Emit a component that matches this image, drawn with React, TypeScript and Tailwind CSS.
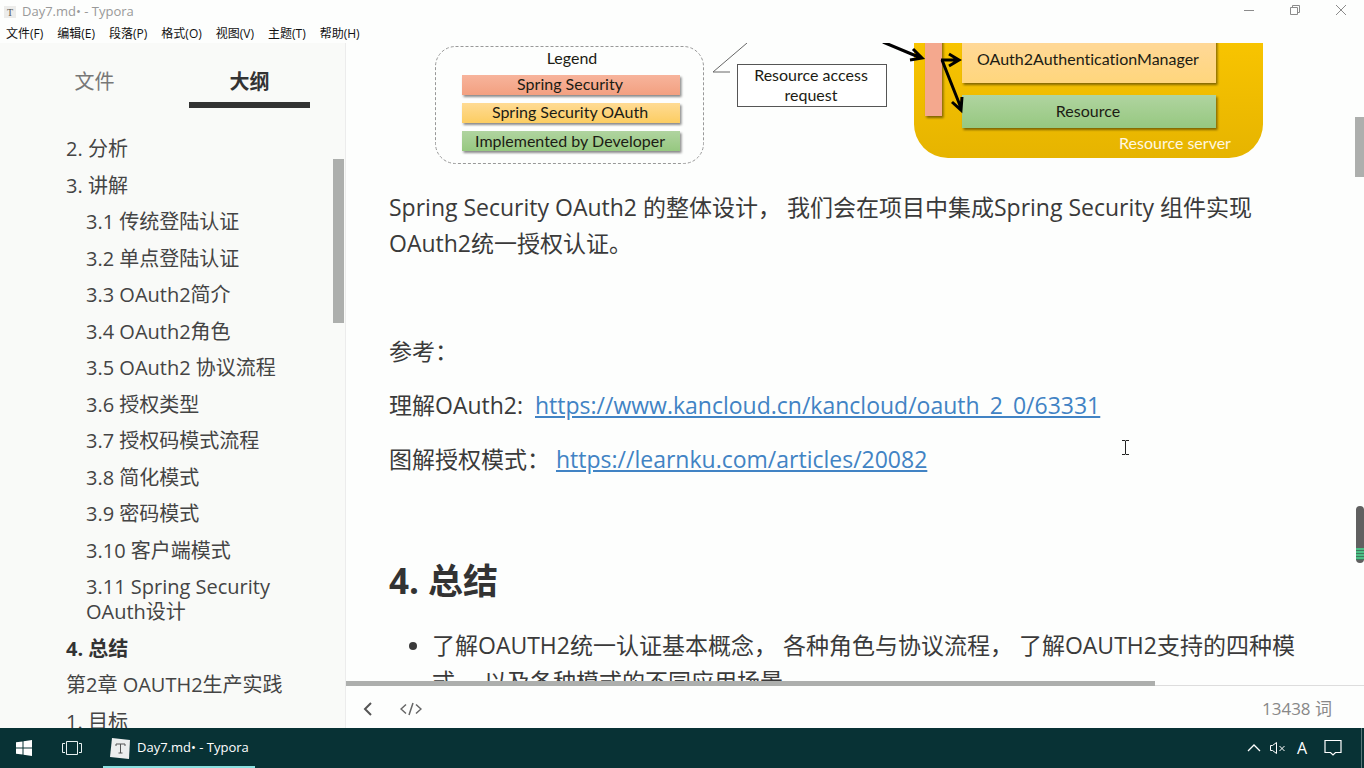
import { clsx } from "clsx";

const MENUS = ["文件(F)", "编辑(E)", "段落(P)", "格式(O)", "视图(V)", "主题(T)", "帮助(H)"];

const OUTLINE = [
  { level: 1, text: "2. 分析" },
  { level: 1, text: "3. 讲解" },
  { level: 2, text: "3.1 传统登陆认证" },
  { level: 2, text: "3.2 单点登陆认证" },
  { level: 2, text: "3.3 OAuth2简介" },
  { level: 2, text: "3.4 OAuth2角色" },
  { level: 2, text: "3.5 OAuth2 协议流程" },
  { level: 2, text: "3.6 授权类型" },
  { level: 2, text: "3.7 授权码模式流程" },
  { level: 2, text: "3.8 简化模式" },
  { level: 2, text: "3.9 密码模式" },
  { level: 2, text: "3.10 客户端模式" },
  { level: 2, text: "3.11 Spring Security OAuth设计" },
  { level: 1, text: "4. 总结", active: true },
  { level: 1, text: "第2章 OAUTH2生产实践" },
  { level: 1, text: "1. 目标" },
];

function TitleBar() {
  return (
    <header className="flex h-6 shrink-0 items-center justify-between pl-1 text-[13px] text-[#999]">
      <div className="flex items-center gap-[6px]">
        <span className="flex h-3 w-3 items-center justify-center bg-[#ececea] font-['Liberation_Serif'] text-[10px] text-[#555]">
          T
        </span>
        <span>Day7.md• - Typora</span>
      </div>
      <div className="flex pb-1">
        <button aria-label="Minimize" className="flex w-[46px] justify-center">
          <svg width="12" height="12" fill="none" stroke="#8b8b8b">
            <path d="M1 6.500h10" />
          </svg>
        </button>
        <button aria-label="Restore" className="flex w-[46px] justify-center">
          <svg width="12" height="12" fill="none" stroke="#8b8b8b">
            <path d="M1.500 3.500h7v7h-7zM3.500 3.500v-2h7v7h-2" />
          </svg>
        </button>
        <button aria-label="Close" className="flex w-[46px] justify-center">
          <svg width="12" height="12" fill="none" stroke="#8b8b8b">
            <path d="M1 1l10 10M11 1L1 11" />
          </svg>
        </button>
      </div>
    </header>
  );
}

function MenuBar() {
  return (
    <nav className="flex h-[19px] shrink-0 items-center gap-[14px] px-[6px] text-xs text-[#111]">
      {MENUS.map((menu) => (
        <button key={menu} className="whitespace-nowrap">
          {menu}
        </button>
      ))}
    </nav>
  );
}

function Sidebar() {
  return (
    <aside className="relative w-[346px] shrink-0 overflow-hidden border-r border-[#ececec] bg-[#f9faf8] text-[#444]">
      <div className="flex pr-[35px] pl-[34px] text-xl">
        <button className="h-[65px] w-[121px] pt-3 text-[#777]">文件</button>
        <button className="ml-[34px] h-[65px] w-[121px] border-b-[6px] border-[#333] pt-[18px] font-bold text-[#333]">
          大纲
        </button>
      </div>
      <ul className="mt-7 flex h-[598px] flex-col justify-between text-xl leading-[25px]">
        {OUTLINE.map((item) => (
          <li
            key={item.text}
            className={clsx(
              "pr-[60px]",
              item.level === 1 ? "pl-[66px]" : "pl-[86px]",
              item.active && "font-bold text-[#333]"
            )}
          >
            <a href="#outline">{item.text}</a>
          </li>
        ))}
      </ul>
      <div className="absolute top-[116px] right-[1px] h-[164px] w-[11px] bg-[#adafad]" />
    </aside>
  );
}

/* Bottom part of the OAuth architecture diagram */
function Diagram() {
  return (
    <svg
      width="875"
      height="127"
      viewBox="389 43 875 127"
      className="block font-[Lato] text-[16px] [font-variant-ligatures:none]"
      fill="#1c1c14"
      textAnchor="middle"
    >
      <defs>
        <linearGradient id="red" x2="0" y2="1">
          <stop stopColor="#f7b49c" />
          <stop offset="1" stopColor="#f3a080" />
        </linearGradient>
        <linearGradient id="yellow" x2="0" y2="1">
          <stop stopColor="#ffdb94" />
          <stop offset="1" stopColor="#fccd62" />
        </linearGradient>
        <linearGradient id="manager" x2="0" y2="1">
          <stop stopColor="#ffd9a0" />
          <stop offset="1" stopColor="#ffd67c" />
        </linearGradient>
        <linearGradient id="green" x2="0" y2="1">
          <stop stopColor="#b0d4a0" />
          <stop offset="1" stopColor="#96c880" />
        </linearGradient>
        <linearGradient id="server" x2="0" y2="1">
          <stop stopColor="#f8c400" />
          <stop offset="1" stopColor="#e6b400" />
        </linearGradient>
        <filter id="shadow" x="-10%" y="-10%" width="120%" height="140%">
          <feDropShadow dx="1.500" dy="2" stdDeviation="1" floodOpacity=".45" />
        </filter>
      </defs>

      {/* Legend */}
      <rect x="435.500" y="46.500" width="268" height="117" rx="20" fill="none" stroke="#999" strokeDasharray="3 2" />
      <text x="572" y="64">Legend</text>
      <g filter="url(#shadow)">
        <rect x="462" y="75" width="218" height="20" fill="url(#red)" />
        <rect x="462" y="103" width="218" height="20" fill="url(#yellow)" />
        <rect x="462" y="131" width="218" height="20" fill="url(#green)" />
      </g>
      <text x="570" y="90">Spring Security</text>
      <text x="570" y="118">Spring Security OAuth</text>
      <text x="570" y="147">Implemented by Developer</text>

      {/* Access request */}
      <path d="M747 43l-34 29h17" fill="none" stroke="#666" />
      <rect x="737.500" y="64.500" width="149" height="42" fill="#fff" stroke="#555" />
      <text x="811" y="81">Resource access</text>
      <text x="811" y="101">request</text>

      {/* Resource server */}
      <path d="M914 43h349v80a34 34 0 0 1-34 35H948a34 34 0 0 1-34-35z" fill="url(#server)" />
      <g filter="url(#shadow)">
        <rect x="925" y="30" width="17" height="86" fill="#f4a88e" />
        <rect x="962" y="30" width="254" height="53" fill="url(#manager)" />
        <rect x="962" y="95" width="254" height="33" fill="url(#green)" />
      </g>
      <text x="1088" y="65">OAuth2AuthenticationManager</text>
      <text x="1088" y="117">Resource</text>
      <text x="1175" y="149" fill="#fff8e0">Resource server</text>
      <g fill="none" stroke="#000" strokeWidth="3">
        <path d="M883 42l38 16M913 49l9 9-12 2" />
        <path d="M941 60h17M949 54l10 6-10 6" />
        <path d="M942 60l19 48M952 102l9 8 1-13" />
      </g>
    </svg>
  );
}

function Editor() {
  return (
    <main className="relative flex min-w-0 flex-1 flex-col">
      <article className="min-h-0 flex-1 overflow-hidden pr-[60px] pl-[43px] text-[23px] leading-9 text-[#3a3a3a]">
        <Diagram />
        <div className="mt-[19px] flex flex-col gap-[18px]">
          <p>
            Spring Security OAuth2 的整体设计， 我们会在项目中集成Spring Security 组件实现OAuth2统一授权认证。
          </p>
          <p className="h-9" />
          <p>参考：</p>
          <p>
            理解OAuth2:&nbsp;{" "}
            <a href="https://www.kancloud.cn/kancloud/oauth_2_0/63331" className="text-[#4183c4] underline">
              https://www.kancloud.cn/kancloud/oauth_2_0/63331
            </a>
          </p>
          <p>
            图解授权模式：{" "}
            <a href="https://learnku.com/articles/20082" className="text-[#4183c4] underline">
              https://learnku.com/articles/20082
            </a>
          </p>
        </div>
        <h2 className="mt-20 text-[35px] leading-[48px] font-bold text-[#333]">4. 总结</h2>
        <ul className="mt-[22px] list-disc pl-[43px]">
          <li>
            了解OAUTH2统一认证基本概念， 各种角色与协议流程， 了解OAUTH2支持的四种模式， 以及各种模式的不同应用场景
          </li>
        </ul>
      </article>
      <footer className="flex h-[43px] shrink-0 items-center gap-[26px] border-t border-[#ddd] bg-[#fdfefd] pt-[3px] pr-8 pl-4 text-[#666]">
        <button aria-label="Toggle sidebar">
          <svg width="12" height="16" fill="none" stroke="#555" strokeWidth="2">
            <path d="M9 2L3 8l6 6" />
          </svg>
        </button>
        <button aria-label="Source mode">
          <svg width="22" height="16" fill="none" stroke="#666" strokeWidth="1.500">
            <path d="M6 3.500L1 8l5 4.500M16 3.500L21 8l-5 4.500M13 2L9 14" />
          </svg>
        </button>
        <span className="ml-auto text-[17px] text-[#888]">13438 词</span>
      </footer>

      {/* Scroll thumbs */}
      <div className="absolute bottom-[42px] left-0 h-[5px] w-[809px] bg-[#adafad]" />
      <div className="absolute top-[74px] right-0 h-[60px] w-[9px] bg-[#adafad]" />
      <div className="absolute top-[463px] right-0 flex h-[57px] w-2 flex-col justify-end overflow-hidden rounded-full bg-[#606060] pb-[3px]">
        <div className="h-3 bg-[repeating-linear-gradient(#4cbf86_0_2px,#3e7a5c_2px_3px)]" />
      </div>
      <svg width="9" height="17" className="absolute top-[396px] left-[775px]" fill="none" stroke="#222">
        <path d="M1 1.500h3l.5.500.5-.5h3M4.500 2v13M1 15.500h3l.5-.5.5.500h3" />
      </svg>
    </main>
  );
}

function Taskbar() {
  return (
    <footer className="flex h-10 shrink-0 items-center bg-[#083235] text-white">
      <button aria-label="Start" className="flex w-12 justify-center">
        <svg width="16" height="16" fill="#fff">
          <path d="M0 2.300l6.500-.9v6.100H0zM7.500 1.200L16 0v7.500H7.500zM0 8.500h6.500v6.100L0 13.700zM7.500 8.500H16V16l-8.500-1.200z" />
        </svg>
      </button>
      <button aria-label="Task view" className="flex w-12 justify-center">
        <svg width="20" height="14" fill="none" stroke="#e8f0f0">
          <path d="M4.500.500h11v13h-11zM3 2.500H.500v9H3M17 2.500h2.500v9H17" />
        </svg>
      </button>
      <button className="ml-[7px] flex h-10 w-[152px] items-center gap-[6px] border-b-2 border-[#8be0e0] pt-[2px] pl-[7px] text-[13px]">
        <svg width="21" height="21" viewBox="0 0 21 21">
          <path d="M2 0l18 2-1 19-19-2z" fill="#eceeee" />
          <path d="M6 8V6h9v2M10.500 6v9M8.500 15h4" fill="none" stroke="#555" />
        </svg>
        Day7.md• - Typora
      </button>
      <div className="ml-auto flex items-center gap-2 pr-[19px]">
        <svg width="14" height="14" fill="none" stroke="#fff" strokeWidth="1.300">
          <path d="M1 10l6-6 6 6" />
        </svg>
        <svg width="17" height="14" fill="none" stroke="#fff">
          <path d="M1.500 4.500h2l4-3v11l-4-3h-2zM10.500 5l5 5M15.500 5l-5 5" />
        </svg>
        <span className="w-4 text-center text-base">A</span>
        <svg width="18" height="18" className="ml-[6px]" fill="none" stroke="#fff" strokeWidth="1.200">
          <path d="M1 1.500h16v12h-5.500L9 16l-2.500-2.500H1z" />
        </svg>
      </div>
      <div className="h-10 w-[3px] border-l border-[#5b7779]" />
    </footer>
  );
}

export default function App() {
  return (
    <div className="flex h-screen flex-col overflow-hidden bg-[#fdfefd] font-['Open_Sans','Noto_Sans_CJK_SC',sans-serif]">
      <TitleBar />
      <MenuBar />
      <div className="flex min-h-0 flex-1">
        <Sidebar />
        <Editor />
      </div>
      <Taskbar />
    </div>
  );
}
